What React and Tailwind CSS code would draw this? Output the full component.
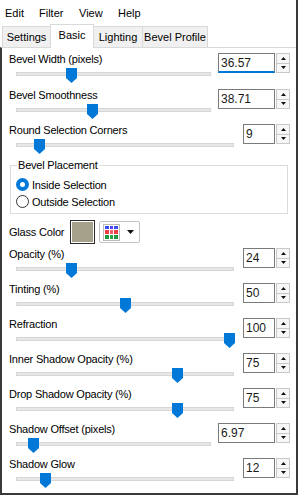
import React from 'react';

const sliders1 = [
  { label: 'Bevel Width (pixels)', value: '36.57', pos: 55, wide: true, focused: true, h: 'h-[36px]' },
  { label: 'Bevel Smoothness', value: '38.71', pos: 76, wide: true },
  { label: 'Round Selection Corners', value: '9', pos: 23 },
];

const sliders2 = [
  { label: 'Opacity (%)', value: '24', pos: 55 },
  { label: 'Tinting (%)', value: '50', pos: 109 },
  { label: 'Refraction', value: '100', pos: 213 },
  { label: 'Inner Shadow Opacity (%)', value: '75', pos: 161 },
  { label: 'Drop Shadow Opacity (%)', value: '75', pos: 161 },
  { label: 'Shadow Offset (pixels)', value: '6.97', pos: 17, wide: true },
  { label: 'Shadow Glow', value: '12', pos: 29 },
];

const gridColors = [
  '#3a4cf2', '#5a3ef0', '#3a4cf2',
  '#ee3e45', '#f06070', '#ee3e45',
  '#1f9a3e', '#25a845', '#1f9a3e',
];

function Spin() {
  return (
    <div className="flex h-[20px] w-[14px] flex-col border border-[#c8c8c8] bg-[#f7f7f7]">
      <div className="flex flex-1 items-center justify-center border-b border-[#c8c8c8]">
        <svg width="5" height="3" viewBox="0 0 5 3">
          <path d="M2.5 0L5 3H0Z" fill="#111" />
        </svg>
      </div>
      <div className="flex flex-1 items-center justify-center">
        <svg width="5" height="3" viewBox="0 0 5 3">
          <path d="M0 0H5L2.5 3Z" fill="#111" />
        </svg>
      </div>
    </div>
  );
}

function NumBox({ value, wide, focused }) {
  return (
    <div className="flex gap-[1px]">
      <div
        className={`h-[20px] border border-[#7a7a7a] bg-white pl-[2px] text-[12px] leading-[18px] text-[#1a1a1a] ${
          wide ? 'w-[57px]' : 'w-[32px]'
        } ${focused ? 'border-b-2 border-b-[#0078d7]' : ''}`}
      >
        {value}
      </div>
      <Spin />
    </div>
  );
}

function Slider({ pos, wide }) {
  return (
    <div className={`relative h-[15px] ${wide ? 'w-[195px]' : 'w-[218px]'}`}>
      <div className="absolute left-0 right-0 top-[4px] h-[4px] border border-[#d6d6d6] bg-[#e7e7e7]" />
      <svg
        className="absolute top-0"
        style={{ left: pos - 5 }}
        width="11"
        height="15"
        viewBox="0 0 11 15"
      >
        <path d="M0 0H11V10L5.5 15L0 10Z" fill="#0078d7" />
      </svg>
    </div>
  );
}

function SliderRow({ label, value, pos, wide, focused, h }) {
  return (
    <div className={`flex ${h || 'h-[35px]'} pl-[7px] pr-[6px]`}>
      <div className="flex-1">
        <div className="h-[16px] text-[11px] leading-[16px] tracking-[-0.2px]">{label}</div>
        <div className="ml-[7px] mt-[1px]">
          <Slider pos={pos} wide={wide} />
        </div>
      </div>
      <div className="pt-[2px]">
        <NumBox value={value} wide={wide} focused={focused} />
      </div>
    </div>
  );
}

function Radio({ checked, label }) {
  return (
    <div className="flex h-[17px] items-center gap-[3px]">
      <svg width="13" height="13" viewBox="0 0 13 13">
        {checked ? (
          <circle cx="6.5" cy="6.5" r="4.5" fill="#fff" stroke="#0078d7" strokeWidth="4" />
        ) : (
          <circle cx="6.5" cy="6.5" r="6" fill="#fff" stroke="#333" strokeWidth="1" />
        )}
      </svg>
      <span className="text-[11px] leading-[16px] tracking-[-0.2px]">{label}</span>
    </div>
  );
}

export default function App() {
  return (
    <div className="flex h-[495px] w-[298px] flex-col overflow-hidden border-r-2 border-[#3a3a3a] bg-white font-['Liberation_Sans',Arial,sans-serif] text-black">
      {/* Menu */}
      <div className="flex h-[24px] pl-[5px] pt-[5px] text-[11px] leading-[16px]">
        <span className="w-[34px]">Edit</span>
        <span className="w-[40px]">Filter</span>
        <span className="w-[39px]">View</span>
        <span>Help</span>
      </div>

      {/* Tabs */}
      <div className="flex h-[23px] items-end pl-[2px] text-[11px] leading-[16px]">
        <div className="h-[21px] w-[48px] border-l border-t border-[#d9d9d9] bg-[#f0f0f0] pt-[2px] text-center">
          Settings
        </div>
        <div className="relative z-10 -mb-px h-[24px] w-[44px] border-l border-r border-t border-[#d9d9d9] bg-white pt-[2px] text-center">
          Basic
        </div>
        <div className="h-[21px] w-[49px] border-r border-t border-[#d9d9d9] bg-[#f0f0f0] pt-[2px] text-center">
          Lighting
        </div>
        <div className="h-[21px] w-[65px] border-r border-t border-[#d9d9d9] bg-[#f0f0f0] pt-[2px] text-center">
          Bevel Profile
        </div>
      </div>

      {/* Page */}
      <div className="flex-1 border-b-2 border-l-2 border-t border-b-[#3a3a3a] border-l-[#3a3a3a] border-t-[#d9d9d9] pt-[3px]">
        {sliders1.map((s) => (
          <SliderRow key={s.label} {...s} />
        ))}

        <fieldset className="ml-[8px] mr-[8px] border border-[#dcdcdc] px-[5px] pb-[3px] pt-[3px]">
          <legend className="ml-[1px] px-[1px] text-[11px] leading-[16px] tracking-[-0.2px]">Bevel Placement</legend>
          <Radio checked label="Inside Selection" />
          <Radio label="Outside Selection" />
        </fieldset>

        <div className="mt-[6px] flex h-[24px] items-center pl-[7px]">
          <span className="w-[61px] text-[11px] leading-[16px] tracking-[-0.2px]">Glass Color</span>
          <div className="h-[24px] w-[25px] border border-[#2a2a2a] p-[1px]">
            <div className="h-full w-full bg-[#a5a18a]" />
          </div>
          <div className="ml-[4px] flex h-[22px] w-[41px] items-center rounded-[2px] border border-[#c4c4c4] bg-white pl-[3px]">
            <div className="grid h-[17px] w-[17px] grid-cols-3 gap-[1px] border border-[#bbb] bg-white p-[1px]">
              {gridColors.map((c, i) => (
                <div key={i} style={{ backgroundColor: c }} />
              ))}
            </div>
            <svg className="ml-[7px]" width="7" height="4" viewBox="0 0 7 4">
              <path d="M0 0H7L3.5 4Z" fill="#111" />
            </svg>
          </div>
        </div>

        <div className="mt-[2px]">
          {sliders2.map((s) => (
            <SliderRow key={s.label} {...s} />
          ))}
        </div>
      </div>
    </div>
  );
}
